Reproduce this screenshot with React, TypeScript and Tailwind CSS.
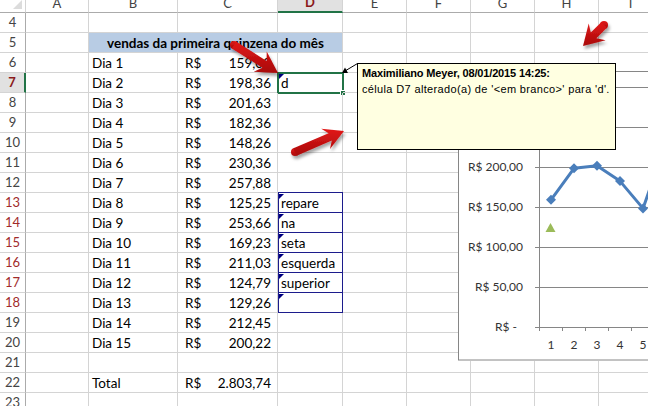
import React from "react";

type Row = { n: number; b?: string; c?: string; rs?: boolean; d?: string; navy?: boolean; title?: boolean };

const rows: Row[] = [
  { n: 4 },
  { n: 5, title: true },
  { n: 6, b: "Dia 1", rs: true, c: "159,00" },
  { n: 7, b: "Dia 2", rs: true, c: "198,36", d: "d" },
  { n: 8, b: "Dia 3", rs: true, c: "201,63" },
  { n: 9, b: "Dia 4", rs: true, c: "182,36" },
  { n: 10, b: "Dia 5", rs: true, c: "148,26" },
  { n: 11, b: "Dia 6", rs: true, c: "230,36" },
  { n: 12, b: "Dia 7", rs: true, c: "257,88" },
  { n: 13, b: "Dia 8", rs: true, c: "125,25", d: "repare", navy: true },
  { n: 14, b: "Dia 9", rs: true, c: "253,66", d: "na", navy: true },
  { n: 15, b: "Dia 10", rs: true, c: "169,23", d: "seta", navy: true },
  { n: 16, b: "Dia 11", rs: true, c: "211,03", d: "esquerda", navy: true },
  { n: 17, b: "Dia 12", rs: true, c: "124,79", d: "superior", navy: true },
  { n: 18, b: "Dia 13", rs: true, c: "129,26", d: "", navy: true },
  { n: 19, b: "Dia 14", rs: true, c: "212,45" },
  { n: 20, b: "Dia 15", rs: true, c: "200,22" },
  { n: 21 },
  { n: 22, b: "Total", rs: true, c: "2.803,74" },
  { n: 23 },
];

const cols = ["A", "B", "C", "D", "E", "F", "G", "H", "I"];
const widths = [
  "w-[63px]",
  "w-[89px]",
  "w-[100px]",
  "w-[65px]",
  "w-[64px]",
  "w-[64px]",
  "w-[64px]",
  "w-[64px]",
  "w-[64px]",
];

const cell = "shrink-0 h-full border-r border-b border-[#d4d4d4] relative";

function HeaderRow() {
  return (
    <div className="flex h-[13px]">
      <div className="relative w-[26px] shrink-0 border-r border-b border-r-[#d4d4d4] border-b-[#ababab]">
        <div className="absolute right-[3px] bottom-[3px] w-0 h-0 border-l-[9px] border-l-transparent border-b-[9px] border-b-[#dcdcdc]" />
      </div>
      {cols.map((c, i) => {
        const sel = c === "D";
        return (
          <div
            key={c}
            className={`${widths[i]} shrink-0 flex items-end justify-center border-r border-r-[#d4d4d4] text-[13px] leading-[13px] pb-[2px] ${
              sel
                ? "bg-[#e1e1e1] border-b-2 border-b-[#217346] text-[#8b1a1a] font-bold"
                : "border-b border-b-[#ababab] text-[#444]"
            }`}
          >
            {c}
          </div>
        );
      })}
    </div>
  );
}

function Tri() {
  return (
    <div className="absolute left-[1px] top-[1px] w-0 h-0 border-t-[5px] border-t-[#000080] border-r-[5px] border-r-transparent" />
  );
}

function BodyRow({ r }: { r: Row }) {
  const selRow = r.n === 7;
  const red = r.n >= 13 && r.n <= 18;
  return (
    <div className="flex h-[20px]">
      <div
        className={`w-[26px] shrink-0 flex items-center justify-center border-b border-b-[#d4d4d4] text-[13px] ${
          selRow
            ? "bg-[#e1e1e1] border-r-2 border-r-[#217346] text-[#8b1a1a] font-bold"
            : red
            ? "border-r border-r-[#ababab] text-[#a12b2b]"
            : "border-r border-r-[#ababab] text-[#444]"
        }`}
      >
        {r.n}
      </div>
      <div className={`${cell} w-[63px]`} />
      {r.title ? (
        <div className={`${cell} w-[254px] bg-[#b8cce4] flex items-end justify-center font-bold leading-[16px] pb-[1px]`}>
          vendas da primeira quinzena do mês
        </div>
      ) : (
        <>
          <div className={`${cell} w-[89px] flex items-end pl-[3px] leading-[16px] pb-[1px]`}>{r.b}</div>
          <div className={`${cell} w-[100px] flex items-end justify-between pl-[7px] pr-[6px] leading-[16px] pb-[1px]`}>
            <span>{r.rs ? "R$" : ""}</span>
            <span>{r.c}</span>
          </div>
          <div className={`${cell} w-[65px] flex items-end pl-[3px] leading-[16px] pb-[1px]`}>
            {r.navy && (
              <div className="absolute left-0 top-[-1px] right-[-1px] bottom-[-1px] border border-[#1c1c8c]" />
            )}
            {r.d !== undefined && <Tri />}
            <span className="relative">{r.d}</span>
            {selRow && (
              <div className="absolute left-[-1px] top-[-1px] right-[-2px] bottom-[-2px] border-2 border-[#217346]">
                <div className="absolute right-[-4px] bottom-[-4px] w-[6px] h-[6px] bg-[#217346] border border-white" />
              </div>
            )}
          </div>
        </>
      )}
      <div className={`${cell} w-[64px]`} />
      <div className={`${cell} w-[64px]`} />
      <div className={`${cell} w-[64px]`} />
      <div className={`${cell} w-[64px]`} />
      <div className={`${cell} w-[64px]`} />
    </div>
  );
}

function Chart() {
  const base = 256;
  const k = 0.8;
  const grid = [300, 250, 200, 150, 100, 50];
  const vals = [159, 198.36, 201.63, 182.36, 148.26, 230.36, 257.88];
  const pts = vals.map((v, i) => [93 + 23 * i, base - v * k] as const);
  const label = (v: number) => `R$ ${v},00`;
  return (
    <div className="absolute left-[458px] top-[71px] w-[200px] h-[290px] bg-white">
      <svg width="200" height="290" className="block">
        <rect x="0.5" y="0.5" width="260" height="288.5" fill="white" stroke="#868686" />
        {grid.map((v) => {
          const y = base - v * k + 0.5;
          return <line key={v} x1="77" x2="200" y1={y} y2={y} stroke="#868686" />;
        })}
        <line x1="77" x2="200" y1={base + 0.5} y2={base + 0.5} stroke="#868686" />
        <line x1="81.5" x2="81.5" y1={16} y2={base + 4} stroke="#868686" />
        {[0, 1, 2, 3, 4, 5].map((i) => (
          <line key={i} x1={81.5 + 23 * i} x2={81.5 + 23 * i} y1={base} y2={base + 4} stroke="#868686" />
        ))}
        <g fontFamily="Lato, sans-serif" fontSize="12" fill="#333">
          {grid.map((v) => (
            <text key={v} x="65" y={base - v * k + 4} textAnchor="end">
              {label(v)}
            </text>
          ))}
          <text x="59" y={base + 4} textAnchor="end">
            R$ -
          </text>
          {[1, 2, 3, 4, 5].map((n, i) => (
            <text key={n} x={93 + 23 * i} y={278} textAnchor="middle">
              {n}
            </text>
          ))}
        </g>
        <polyline
          points={pts.map((p) => p.join(",")).join(" ")}
          fill="none"
          stroke="#4a7ebb"
          strokeWidth="3"
          strokeLinejoin="round"
        />
        {pts.map(([x, y], i) => (
          <polygon key={i} points={`${x},${y - 5} ${x + 5},${y} ${x},${y + 5} ${x - 5},${y}`} fill="#4a7ebb" />
        ))}
        <polygon points="92.5,152 97.5,161 87.5,161" fill="#9bbb59" />
      </svg>
    </div>
  );
}

function Comment() {
  return (
    <div className="absolute left-[357px] top-[63px] w-[259px] h-[87px] bg-[#ffffe1] border border-black pl-[4px] pt-[1px] font-[family-name:'Liberation_Sans',sans-serif] text-[11px] leading-[16px] text-black whitespace-nowrap overflow-hidden">
      <div className="font-bold tracking-[-0.15px]">Maximiliano Meyer, 08/01/2015 14:25:</div>
      <div className="tracking-[0.35px]">célula D7 alterado(a) de '&lt;em branco&gt;' para 'd'.</div>
    </div>
  );
}

function arrowShape(tx: number, ty: number, hx: number, hy: number, shaft: number, headW: number, headL: number) {
  const dx = hx - tx;
  const dy = hy - ty;
  const L = Math.hypot(dx, dy);
  const ux = dx / L;
  const uy = dy / L;
  const px = -uy;
  const py = ux;
  const bx = hx - ux * headL;
  const by = hy - uy * headL;
  const s = shaft / 2;
  const h = headW / 2;
  const sx = bx + ux * 3;
  const sy = by + uy * 3;
  const poly = [
    [tx + px * s, ty + py * s],
    [sx + px * s, sy + py * s],
    [bx + px * h - ux * 2, by + py * h - uy * 2],
    [hx, hy],
    [bx - px * h - ux * 2, by - py * h - uy * 2],
    [sx - px * s, sy - py * s],
    [tx - px * s, ty - py * s],
  ]
    .map((p) => `${p[0].toFixed(1)},${p[1].toFixed(1)}`)
    .join(" ");
  return { poly, tx, ty, r: s };
}

function Arrow({ a }: { a: [number, number, number, number, number, number, number] }) {
  const s = arrowShape(...a);
  return (
    <g filter="url(#shadow)">
      <circle cx={s.tx} cy={s.ty} r={s.r} fill="url(#redg)" />
      <polygon points={s.poly} fill="url(#redg)" />
    </g>
  );
}

function Arrows() {
  return (
    <svg className="absolute left-0 top-0 pointer-events-none" width="648" height="406">
      <defs>
        <linearGradient id="redg" x1="0" y1="0" x2="0" y2="1">
          <stop offset="0" stopColor="#e21a1a" />
          <stop offset="1" stopColor="#a80808" />
        </linearGradient>
        <filter id="shadow" x="-50%" y="-50%" width="200%" height="200%">
          <feDropShadow dx="1.5" dy="3" stdDeviation="1.8" floodColor="#000" floodOpacity="0.35" />
        </filter>
      </defs>
      <line x1="345" y1="71" x2="357.5" y2="63.5" stroke="#000" strokeWidth="1" />
      <polygon points="342,73 348,73 345,67.5" fill="#000" />
      <Arrow a={[234, 45, 278, 73, 8, 24, 19]} />
      <Arrow a={[295, 152, 344, 131, 8, 22, 18]} />
      <Arrow a={[604, 25, 583, 46, 8, 24, 18]} />
    </svg>
  );
}

export default function App() {
  return (
    <div className="relative w-[648px] h-[406px] overflow-hidden bg-white font-[family-name:Lato,sans-serif] text-[13.5px] text-black">
      <HeaderRow />
      {rows.map((r) => (
        <BodyRow key={r.n} r={r} />
      ))}
      <Chart />
      <Comment />
      <Arrows />
    </div>
  );
}
